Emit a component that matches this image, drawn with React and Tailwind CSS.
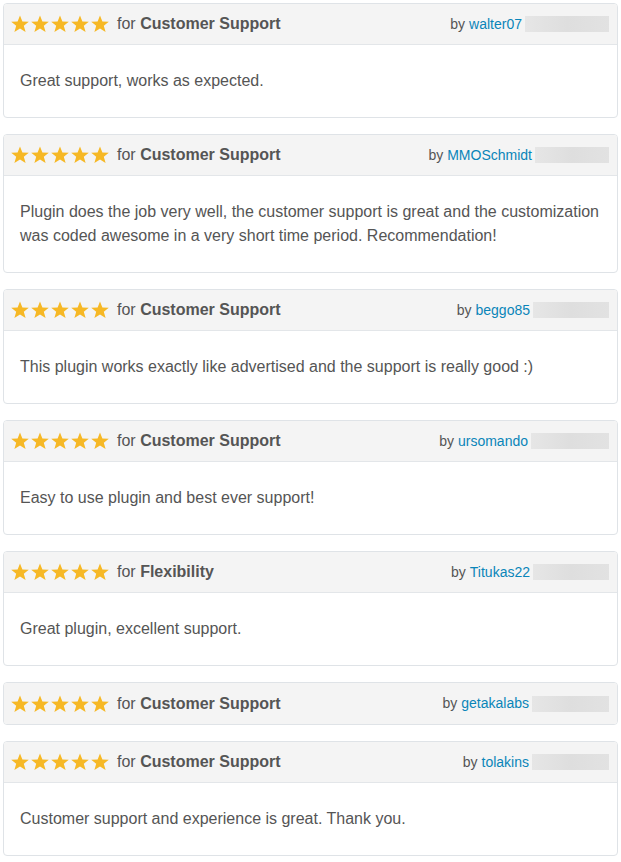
import React from 'react';

const reviews = [
  { topic: 'Customer Support', user: 'walter07', blur: 84, text: 'Great support, works as expected.' },
  {
    topic: 'Customer Support',
    user: 'MMOSchmidt',
    blur: 74,
    text: 'Plugin does the job very well, the customer support is great and the customization was coded awesome in a very short time period. Recommendation!',
  },
  { topic: 'Customer Support', user: 'beggo85', blur: 76, text: 'This plugin works exactly like advertised and the support is really good :)' },
  { topic: 'Customer Support', user: 'ursomando', blur: 78, text: 'Easy to use plugin and best ever support!' },
  { topic: 'Flexibility', user: 'Titukas22', blur: 76, text: 'Great plugin, excellent support.' },
  { topic: 'Customer Support', user: 'getakalabs', blur: 77, text: '' },
  { topic: 'Customer Support', user: 'tolakins', blur: 77, text: 'Customer support and experience is great. Thank you.' },
];

const Star = () => (
  <svg width="20" height="20" viewBox="0 0 20 20" className="shrink-0">
    <polygon
      points="10,1.5 12.4,7.6 18.8,7.8 13.8,11.8 15.6,18 10,14.4 4.4,18 6.2,11.8 1.2,7.8 7.6,7.6"
      fill="#f6b825"
    />
  </svg>
);

const ReviewCard = ({ review }) => (
  <div className="border border-[#dfe3e7] rounded-[4px] bg-white overflow-hidden">
    <div
      className={`h-[41px] bg-[#f4f4f4] flex items-center justify-between pl-[6px] pr-[8px] ${
        review.text ? 'border-b border-[#e3e6e9]' : ''
      }`}
    >
      <div className="flex items-center">
        <div className="flex items-center">
          {[0, 1, 2, 3, 4].map((i) => (
            <Star key={i} />
          ))}
        </div>
        <span className="ml-[7px] text-[16px] text-[#555]">
          for <b className="font-bold">{review.topic}</b>
        </span>
      </div>
      <div className="flex items-center text-[14px]">
        <span className="text-[#555]">by</span>
        <a className="ml-[4px] text-[#0a85b9]">{review.user}</a>
        <span
          className="ml-[3px] h-[16px] bg-gradient-to-r from-[#e6e6e6] via-[#dedede] to-[#e2e2e2]"
          style={{ width: review.blur }}
        />
      </div>
    </div>
    {review.text && (
      <div className="px-4 py-6 text-[16px] leading-6 text-[#555]">{review.text}</div>
    )}
  </div>
);

const App = () => {
  return (
    <div className="bg-white p-[3px]" style={{ fontFamily: '"Liberation Sans", Arial, sans-serif' }}>
      <div className="space-y-4">
        {reviews.map((r, idx) => (
          <ReviewCard key={idx} review={r} />
        ))}
      </div>
    </div>
  );
};

export default App;
